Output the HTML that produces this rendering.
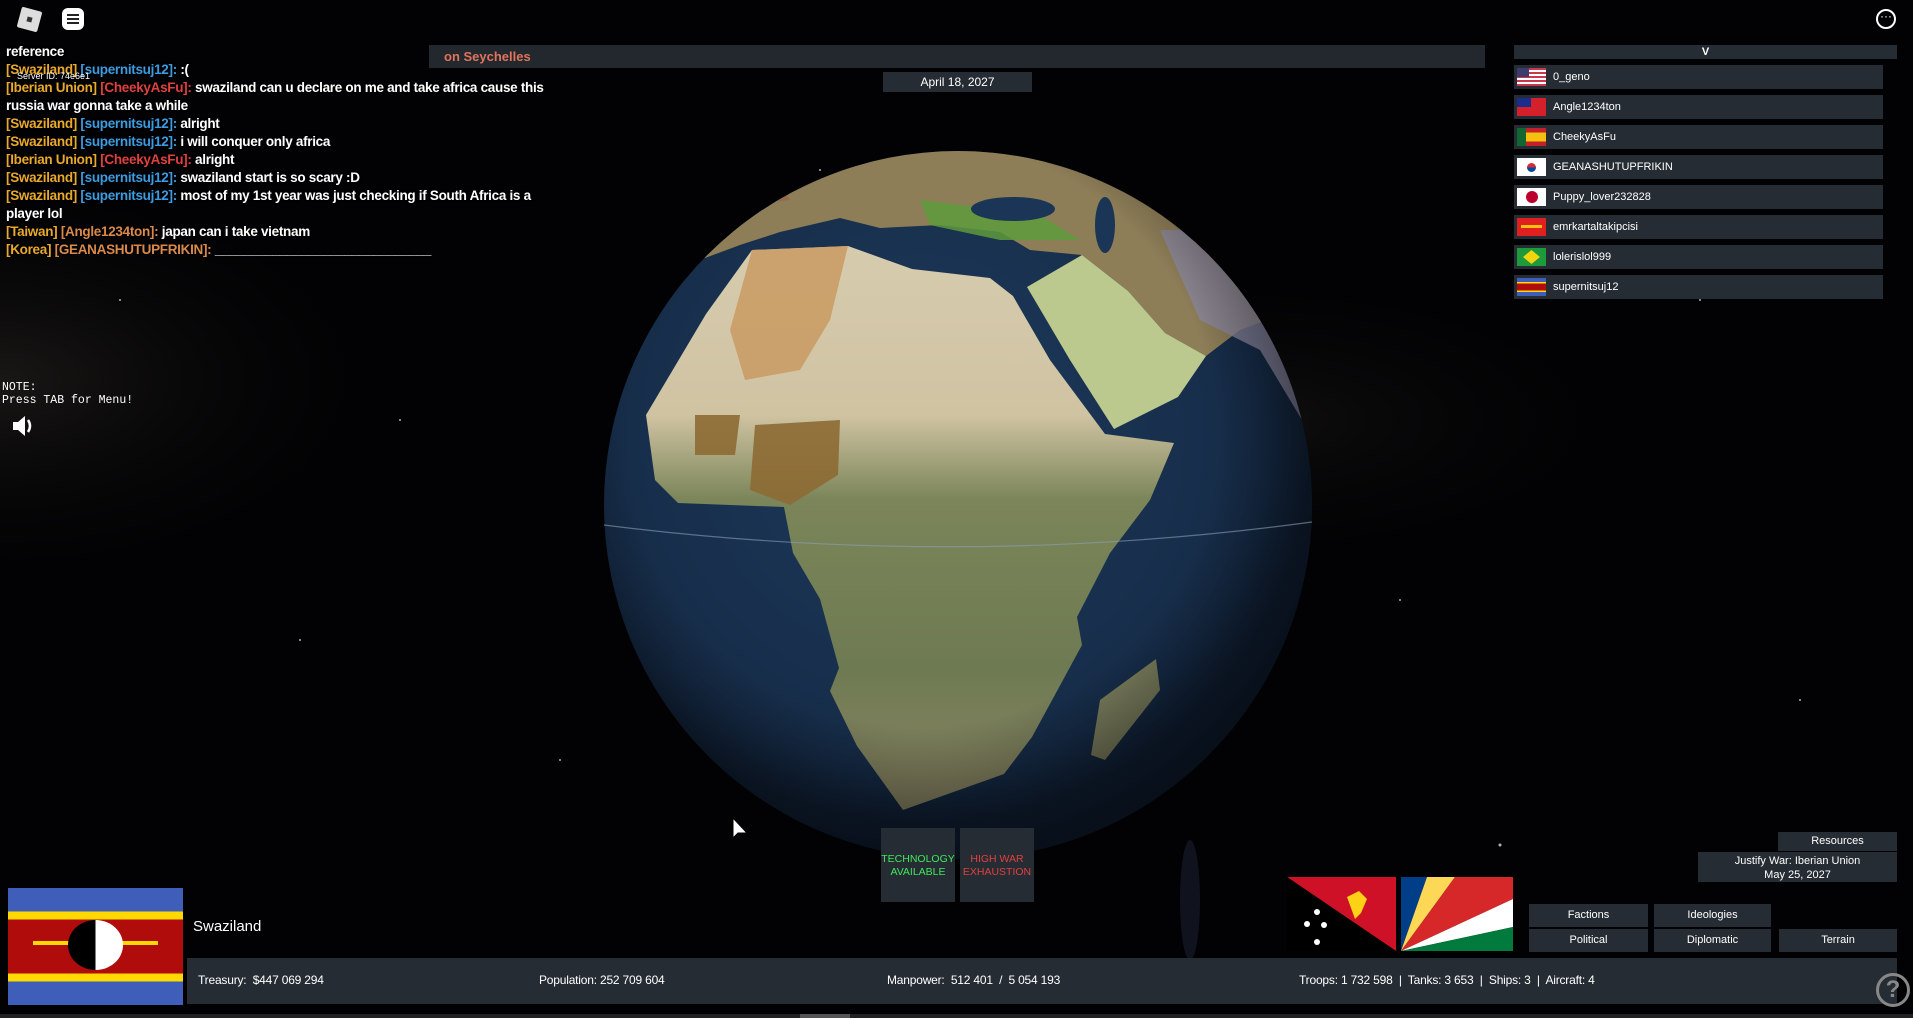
<!DOCTYPE html>
<html><head><meta charset="utf-8"><style>
*{margin:0;padding:0;box-sizing:border-box}
body{width:1913px;height:1018px;overflow:hidden;background:#020204;position:relative;font-family:"Liberation Sans",sans-serif;color:#fff}
.abs{position:absolute}
.chat{left:6px;top:43px;width:565px;font-size:13.5px;font-weight:bold;line-height:18px;letter-spacing:-0.3px;text-shadow:0 0 2px #000}
.y{color:#e8a92c}.b{color:#3d9be0}.r{color:#e0403e}.o{color:#d9894a}
.bar{background:#262c33}
.row{position:absolute;left:1514px;width:369px;height:24px;background:#262c33;font-size:11px;line-height:24px;padding-left:39px;color:#fff}
.row i{position:absolute;left:3px;top:3px;width:29px;height:18px}
.btn{position:absolute;background:#262c33;font-size:11px;text-align:center;color:#fff}
.stat{position:absolute;top:973px;font-size:12px;color:#fff;letter-spacing:-0.2px}
</style></head><body>
<svg class="abs" style="left:0;top:0" width="1913" height="1018">
<defs>
<radialGradient id="mw" cx="0.2" cy="0.5" r="0.5"><stop offset="0" stop-color="#2a2622" stop-opacity=".6"/><stop offset="1" stop-color="#000" stop-opacity="0"/></radialGradient>
<radialGradient id="sea" cx="0.45" cy="0.4" r="0.6"><stop offset="0" stop-color="#1d3a5c"/><stop offset="0.8" stop-color="#162c48"/><stop offset="1" stop-color="#0e1c30"/></radialGradient>
<linearGradient id="af" x1="0" y1="0" x2="0" y2="1"><stop offset="0" stop-color="#d6cbae"/><stop offset="0.3" stop-color="#cfc3a2"/><stop offset="0.45" stop-color="#7b8559"/><stop offset="0.75" stop-color="#6e7a52"/><stop offset="1" stop-color="#8c8766"/></linearGradient>
<radialGradient id="shade" cx="0.45" cy="0.4" r="0.55"><stop offset="0.75" stop-color="#000" stop-opacity="0"/><stop offset="1" stop-color="#000" stop-opacity=".45"/></radialGradient>
<clipPath id="gc"><circle cx="958" cy="505" r="354"/></clipPath>
</defs>
<ellipse cx="250" cy="380" rx="420" ry="220" fill="url(#mw)"/>
<ellipse cx="1500" cy="420" rx="420" ry="160" fill="url(#mw)" opacity=".6"/>
<ellipse cx="1190" cy="900" rx="10" ry="60" fill="#3a4266" opacity=".25"/>
<g fill="#fff" opacity=".7"><circle cx="120" cy="300" r="1"/><circle cx="400" cy="420" r="1"/><circle cx="1500" cy="845" r="1.5"/><circle cx="1700" cy="300" r="1"/><circle cx="300" cy="640" r="1"/><circle cx="1400" cy="600" r="1"/><circle cx="820" cy="170" r="1"/><circle cx="1800" cy="700" r="1"/><circle cx="560" cy="760" r="1"/></g>
<circle cx="958" cy="505" r="354" fill="url(#sea)"/>
<g clip-path="url(#gc)">
<path d="M600 140 L1320 140 L1320 300 L1240 330 L1206 356 L1165 333 L1128 291 L1082 255 L1030 250 L1000 232 L940 225 L880 228 L840 218 L780 232 L740 245 L705 258 L690 240 L600 250 Z" fill="#8e7e58"/>
<path d="M1027 287 L1082 255 L1128 291 L1165 333 L1206 356 L1178 397 L1114 429 L1070 360Z" fill="#bcc98e"/>
<path d="M1160 230 L1320 230 L1320 450 L1260 350 L1200 320Z" fill="#8c88a0" opacity=".8"/>
<path d="M920 200 L1040 215 L1080 240 L1000 240 L930 225Z" fill="#5e9a3c" opacity=".85"/>
<ellipse cx="1013" cy="209" rx="42" ry="12" fill="#1b3556"/>
<ellipse cx="1105" cy="225" rx="10" ry="28" fill="#1b3556"/>
<path d="M640 170 L760 160 L790 200 L700 210Z" fill="#9a5a40" opacity=".5"/>
<path d="M848 246 L912 269 L990 278 L1013 296 L1050 360 L1105 434 L1174 443 L1150 500 L1110 553 L1077 617 L1082 645 L1032 737 L1004 774 L903 810 L857 746 L830 691 L839 668 L820 599 L793 553 L784 507 L678 503 L655 480 L646 415 L706 314 L752 250Z" fill="url(#af)"/>
<path d="M752 250 L848 246 L830 320 L800 370 L745 380 L730 330Z" fill="#c99a62" opacity=".85"/>
<path d="M755 425 L840 420 L838 475 L790 505 L750 490Z" fill="#8d6a33" opacity=".9"/>
<path d="M695 415 L740 415 L735 455 L695 455Z" fill="#8d6a33" opacity=".9"/>
<path d="M1156 659 L1160 690 L1105 760 L1091 755 L1100 700Z" fill="#7c7f5e"/>
<circle cx="958" cy="505" r="354" fill="url(#shade)"/>
</g>
<path d="M604 525 Q958 570 1312 522" stroke="#8aa0b8" stroke-width="1.2" fill="none" opacity=".6"/>
<path d="M733 818 l0 20 l5 -5 l9 0 z" fill="#fff" stroke="#000" stroke-width="1"/>
</svg>

<div class="abs" style="left:19px;top:9px;width:21px;height:21px;background:#ddd;transform:rotate(15deg);border-radius:2px"><div style="position:absolute;left:8px;top:8px;width:5px;height:5px;background:#333"></div></div>
<div class="abs" style="left:62px;top:8px;width:22px;height:22px;background:#fff;border-radius:6px"><div style="position:absolute;left:5px;top:6px;width:12px;height:2px;background:#222;box-shadow:0 4px #222,0 8px #222"></div></div>
<div class="abs" style="left:1876px;top:9px;width:20px;height:20px;border:2px solid #fff;border-radius:50%;font-size:12px;line-height:10px;text-align:center">···</div>

<div class="abs chat">
<div>reference</div>
<div><span class="y">[Swaziland]</span> <span class="b">[supernitsuj12]:</span> :(</div>
<div><span class="y">[Iberian Union]</span> <span class="r">[CheekyAsFu]:</span> swaziland can u declare on me and take africa cause this russia war gonna take a while</div>
<div><span class="y">[Swaziland]</span> <span class="b">[supernitsuj12]:</span> alright</div>
<div><span class="y">[Swaziland]</span> <span class="b">[supernitsuj12]:</span> i will conquer only africa</div>
<div><span class="y">[Iberian Union]</span> <span class="r">[CheekyAsFu]:</span> alright</div>
<div><span class="y">[Swaziland]</span> <span class="b">[supernitsuj12]:</span> swaziland start is so scary :D</div>
<div><span class="y">[Swaziland]</span> <span class="b">[supernitsuj12]:</span> most of my 1st year was just checking if South Africa is a player lol</div>
<div><span class="y">[Taiwan]</span> <span class="o">[Angle1234ton]:</span> japan can i take vietnam</div>
<div><span class="y">[Korea]</span> <span class="o">[GEANASHUTUPFRIKIN]:</span> ______________________________</div>
</div>
<div class="abs" style="left:17px;top:71px;font-size:9px;color:#fff">Server ID: 74e6e1</div>

<div class="abs" style="left:2px;top:381px;font-family:'Liberation Mono',monospace;font-size:11.5px;line-height:13px">NOTE:<br>Press TAB for Menu!</div>
<svg class="abs" style="left:11px;top:414px" width="24" height="24"><path d="M2 8h5l7-6v20l-7-6H2z" fill="#fff"/><path d="M17 6q4 6 0 12" stroke="#fff" stroke-width="2.5" fill="none"/></svg>

<div class="abs bar" style="left:429px;top:45px;width:1056px;height:23px;background:#262c33e6;font-size:13px;font-weight:bold;color:#e0735a;line-height:23px;padding-left:15px">on Seychelles</div>
<div class="abs bar" style="left:883px;top:72px;width:149px;height:20px;font-size:12px;line-height:20px;text-align:center">April 18, 2027</div>

<div class="abs bar" style="left:1514px;top:45px;width:383px;height:14px;font-size:11px;font-weight:bold;line-height:14px;text-align:center">V</div>
<div class="row" style="top:65px"><i style="background:repeating-linear-gradient(#c8374a 0 2px,#fff 2px 4px)"><b style="position:absolute;left:0;top:0;width:12px;height:9px;background:#3c3b6e"></b></i>0_geno</div>
<div class="row" style="top:95px"><i style="background:#d3202a"><b style="position:absolute;left:0;top:0;width:14px;height:9px;background:#1a2c8c"></b></i>Angle1234ton</div>
<div class="row" style="top:125px"><i style="background:linear-gradient(#c4202a 0 25%,#f4c10f 25% 75%,#c4202a 75%)"><b style="position:absolute;left:0;top:0;width:9px;height:18px;background:#106830"></b></i>CheekyAsFu</div>
<div class="row" style="top:155px"><i style="background:#fff"><b style="position:absolute;left:10px;top:5px;width:9px;height:9px;border-radius:50%;background:linear-gradient(#cd2e3a 50%,#0047a0 50%)"></b></i>GEANASHUTUPFRIKIN</div>
<div class="row" style="top:185px"><i style="background:#fff"><b style="position:absolute;left:9px;top:3px;width:12px;height:12px;border-radius:50%;background:#bc002d"></b></i>Puppy_lover232828</div>
<div class="row" style="top:215px"><i style="background:#e02020"><b style="position:absolute;left:4px;top:7px;width:21px;height:3px;background:#f4c10f"></b></i>emrkartaltakipcisi</div>
<div class="row" style="top:245px"><i style="background:#1c9a3c"><b style="position:absolute;left:6px;top:2px;width:17px;height:14px;background:#f2d50f;clip-path:polygon(50% 0,100% 50%,50% 100%,0 50%)"></b></i>lolerislol999</div>
<div class="row" style="top:275px"><i style="background:linear-gradient(#3e5eb9 0 22%,#ffd900 22% 30%,#b10c0c 30% 70%,#ffd900 70% 78%,#3e5eb9 78%)"></i>supernitsuj12</div>

<div class="btn" style="left:881px;top:828px;width:74px;height:74px;font-size:10.5px;color:#3ee85a;padding-top:25px;line-height:13px">TECHNOLOGY<br>AVAILABLE</div>
<div class="btn" style="left:960px;top:828px;width:74px;height:74px;font-size:10.5px;color:#e04040;padding-top:25px;line-height:13px">HIGH WAR<br>EXHAUSTION</div>

<div class="btn" style="left:1778px;top:832px;width:119px;height:19px;line-height:19px">Resources</div>
<div class="btn" style="left:1698px;top:852px;width:199px;height:30px;line-height:14px;padding-top:2px">Justify War: Iberian Union<br>May 25, 2027</div>

<svg class="abs" style="left:1287px;top:877px" width="226" height="74">
<polygon points="0,0 109,0 109,74" fill="#ce1126"/><polygon points="0,0 109,74 0,74" fill="#000"/>
<path d="M60 20 l12 -6 l8 8 l-6 14 l-6 6z" fill="#fcd116"/>
<g fill="#fff"><circle cx="30" cy="35" r="3"/><circle cx="20" cy="47" r="3"/><circle cx="37" cy="48" r="3"/><circle cx="30" cy="65" r="3"/></g>
<polygon points="114,74 114,0 140,0" fill="#003f87"/><polygon points="114,74 140,0 168,0" fill="#fcd856"/><polygon points="114,74 168,0 226,0 226,22" fill="#d62828"/><polygon points="114,74 226,22 226,50" fill="#fff"/><polygon points="114,74 226,50 226,74" fill="#007a3d"/>
</svg>

<div class="btn" style="left:1529px;top:904px;width:119px;height:23px;line-height:23px">Factions</div>
<div class="btn" style="left:1654px;top:904px;width:117px;height:23px;line-height:23px">Ideologies</div>
<div class="btn" style="left:1529px;top:929px;width:119px;height:23px;line-height:23px">Political</div>
<div class="btn" style="left:1654px;top:929px;width:117px;height:23px;line-height:23px">Diplomatic</div>
<div class="btn" style="left:1779px;top:929px;width:118px;height:23px;line-height:23px">Terrain</div>

<div class="abs" style="left:8px;top:888px;width:175px;height:117px;background:linear-gradient(#3e5eb9 0 20%,#ffd900 20% 27%,#b10c0c 27% 73%,#ffd900 73% 80%,#3e5eb9 80%)">
<div style="position:absolute;left:25px;top:53px;width:125px;height:4px;background:#ffd900"></div>
<div style="position:absolute;left:60px;top:32px;width:55px;height:50px;border-radius:50%;background:linear-gradient(90deg,#000 50%,#fff 50%)"></div>
</div>
<div class="abs" style="left:193px;top:918px;font-size:15px">Swaziland</div>

<div class="abs bar" style="left:187px;top:958px;width:1710px;height:46px"></div>
<div class="stat" style="left:198px">Treasury:&nbsp; $447 069 294</div>
<div class="stat" style="left:539px">Population: 252 709 604</div>
<div class="stat" style="left:887px">Manpower:&nbsp; 512 401&nbsp; /&nbsp; 5 054 193</div>
<div class="stat" style="left:1299px">Troops: 1 732 598&nbsp; |&nbsp; Tanks: 3 653&nbsp; |&nbsp; Ships: 3&nbsp; |&nbsp; Aircraft: 4</div>
<div class="abs" style="left:1876px;top:973px;width:34px;height:34px;border:3px solid #888;border-radius:50%;color:#888;font-size:24px;font-weight:bold;text-align:center;line-height:28px">?</div>
<div class="abs" style="left:0;top:1014px;width:1913px;height:4px;background:#222"><div style="position:absolute;left:800px;width:50px;height:4px;background:#555"></div></div>
</body></html>
